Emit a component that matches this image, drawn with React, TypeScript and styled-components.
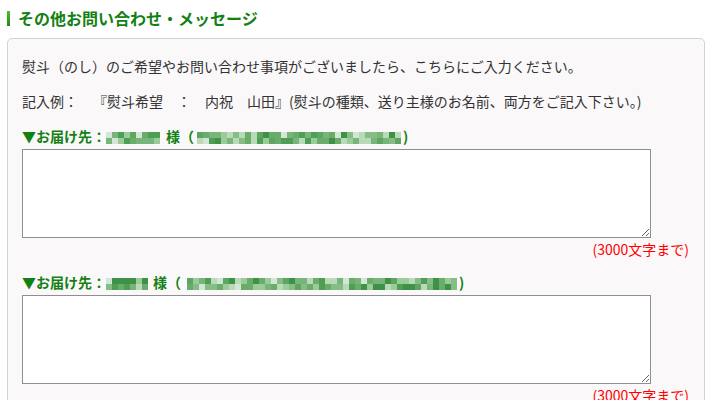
import React from "react"
import styled, { createGlobalStyle } from "styled-components"

const GlobalStyle = createGlobalStyle`
  html, body {
    margin: 0;
    padding: 0;
    background: #ffffff;
  }
  body {
    font-family: "Noto Sans CJK JP", "Liberation Sans", sans-serif;
    color: #333333;
  }
`

const Page = styled.div`
  padding: 8px 5px 0 7px;
  width: 698px;
`

const Heading = styled.h2`
  display: flex;
  align-items: center;
  gap: 8px;
  margin: 0 0 10px;
  font-size: 16px;
  line-height: 20px;
  font-weight: bold;
  color: #128012;
  &::before {
    content: "";
    width: 3px;
    height: 15px;
    background: linear-gradient(#4cc02c, #1e8a10);
  }
`

const Panel = styled.div`
  background: #faf8f9;
  border: 1px solid #d2d2d2;
  border-radius: 5px;
  padding: 17px 15px 20px 14px;
`

const Paragraph = styled.p`
  margin: 0 0 15px;
  font-size: 14px;
  line-height: 20px;
  color: #333333;
  white-space: pre;
`

const Quote = styled.span`
  margin-left: 8px;
`

const Label = styled.div`
  height: 20px;
  font-size: 14px;
  line-height: 20px;
  font-weight: bold;
  color: #128012;
  white-space: nowrap;
`

const Mosaic = styled.span<{ $gapLeft: number; $gapRight: number }>`
  display: inline-block;
  height: 12px;
  vertical-align: -2px;
  margin: 0 ${(p) => p.$gapRight}px 0 ${(p) => p.$gapLeft}px;
`

const MosaicRow = styled.span`
  display: flex;
  height: 6px;
`

const Cell = styled.span`
  width: 6px;
  height: 6px;
`

const TextArea = styled.textarea`
  display: block;
  box-sizing: border-box;
  width: 629px;
  height: 89px;
  margin: 3px 0 0;
  border: 1px solid #8f8f8f;
  background: #ffffff;
  font-family: inherit;
  font-size: 14px;
  padding: 2px;
  resize: both;
`

const Counter = styled.div`
  text-align: right;
  font-size: 14px;
  line-height: 20px;
  color: #ff0000;
  margin: 1px 0 13px 0;
`

const palette = [
  "#4f9e55",
  "#6aac6a",
  "#86bd86",
  "#9ccb9a",
  "#b9dab8",
  "#3e9146",
  "#78b57a",
  "#5fa562",
  "#d3e6d5",
]

const shade = (seed: number, i: number) => {
  const v = Math.abs(Math.sin(seed * 97.13 + i * 12.9898) * 43758.5453)
  return palette[Math.floor((v - Math.floor(v)) * palette.length)]
}

const Blur: React.FC<{ cells: number; seed: number; left?: number; right?: number }> = ({
  cells,
  seed,
  left = 0,
  right = 0,
}) => (
  <Mosaic $gapLeft={left} $gapRight={right}>
    {[0, 1].map((row) => (
      <MosaicRow key={row}>
        {Array.from({ length: cells }).map((_, i) => (
          <Cell key={i} style={{ background: shade(seed + row * 7, i) }} />
        ))}
      </MosaicRow>
    ))}
  </Mosaic>
)

const recipients = [
  { nameCells: 9, nameGap: 6, addrCells: 34, addrGap: 3, seed: 1 },
  { nameCells: 7, nameGap: 5, addrCells: 45, addrGap: 6, seed: 5 },
]

const App: React.FC = () => {
  return (
    <Page>
      <GlobalStyle />
      <Heading>その他お問い合わせ・メッセージ</Heading>
      <Panel>
        <Paragraph>熨斗（のし）のご希望やお問い合わせ事項がございましたら、こちらにご入力ください。</Paragraph>
        <Paragraph>
          記入例：
          <Quote>　『熨斗希望　：　内祝　山田』(熨斗の種類、送り主様のお名前、両方をご記入下さい。)</Quote>
        </Paragraph>

        {recipients.map((r) => (
          <div key={r.seed}>
            <Label>
              ▼お届け先：
              <Blur cells={r.nameCells} seed={r.seed} right={r.nameGap} />
              様（
              <Blur cells={r.addrCells} seed={r.seed + 2} left={r.addrGap} right={2} />)
            </Label>
            <TextArea />
            <Counter>(3000文字まで)</Counter>
          </div>
        ))}
      </Panel>
    </Page>
  )
}

export default App
